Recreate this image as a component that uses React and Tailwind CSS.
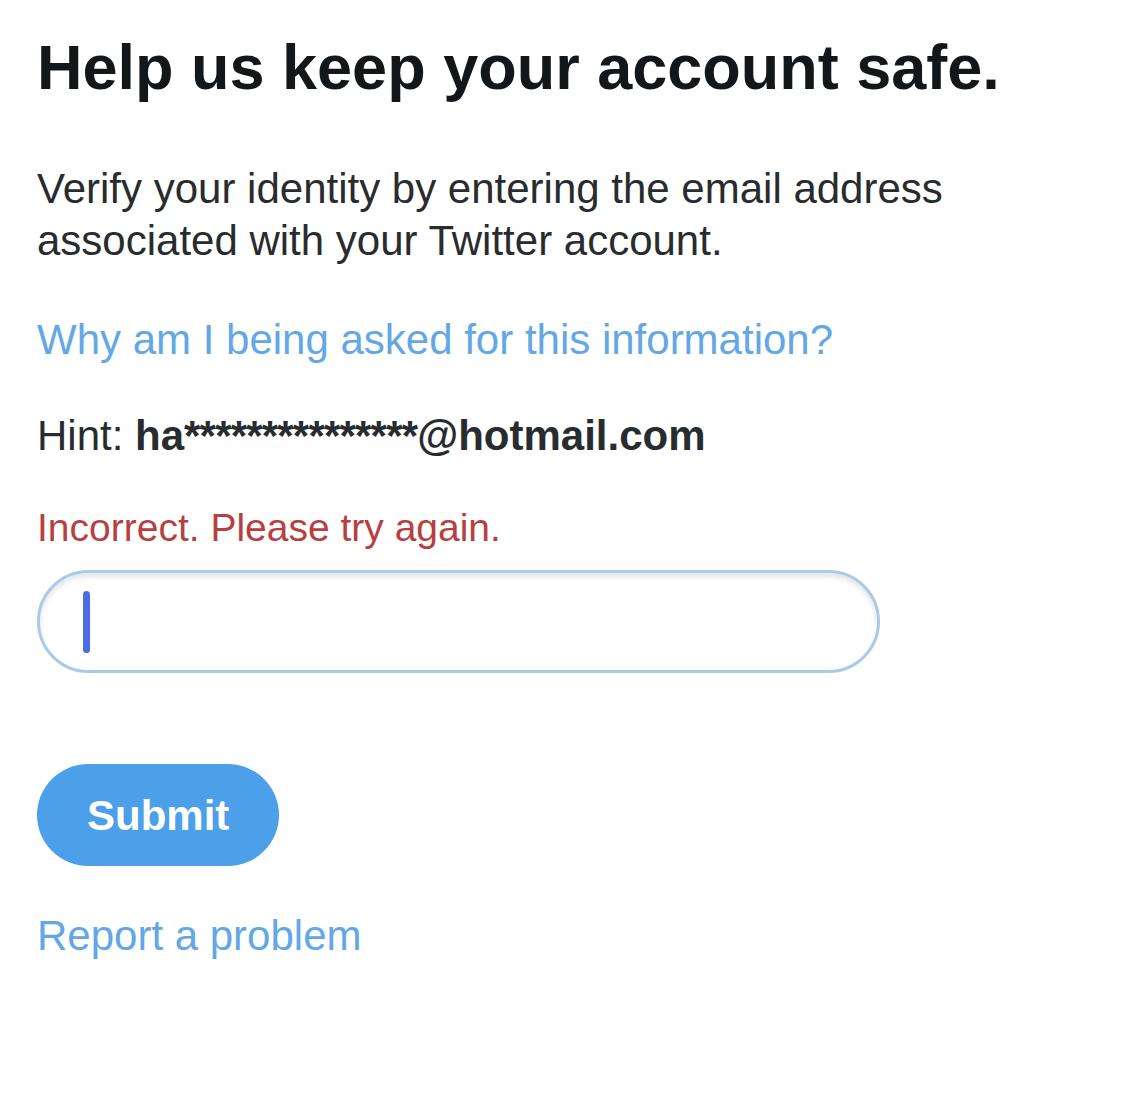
import { useState } from "react";

const App = () => {
  const [email] = useState("");

  return (
    <div className="min-h-screen bg-white pl-[37px] pt-[29px] font-['Liberation_Sans',Arial,sans-serif]">
      <h1 className="text-[63px] leading-[76px] font-bold text-[#14171a]">
        Help us keep your account safe.
      </h1>
      <p className="mt-[58px] text-[42px] leading-[52px] text-[#292c2f]">
        Verify your identity by entering the email address
        <br />
        associated with your Twitter account.
      </p>
      <a href="#" className="mt-[47px] block text-[42px] leading-[52px] text-[#63a7e6]">
        Why am I being asked for this information?
      </a>
      <p className="mt-[44px] text-[42px] leading-[52px] text-[#292c2f]">
        Hint:{" "}
        <span className="font-bold">
          ha<span className="tracking-[-0.8px]">***************</span>@hotmail.com
        </span>
      </p>
      <p className="mt-[40px] text-[39px] leading-[52px] text-[#b83f3f]">
        Incorrect. Please try again.
      </p>
      <div className="mt-[16px] flex h-[103px] w-[843px] items-center rounded-full border-[3px] border-[#a8cbea] bg-white pl-[43px] shadow-[inset_0_4px_5px_rgba(0,0,0,0.10)]">
        <span className="text-[42px]">{email}</span>
        <span className="block h-[62px] w-[7px] rounded-full bg-[#4c6be6]"></span>
      </div>
      <button className="mt-[91px] flex h-[102px] items-center rounded-full bg-[#4c9fe9] px-[50px] text-[42px] font-bold text-white">
        Submit
      </button>
      <a href="#" className="mt-[44px] block text-[42px] leading-[52px] text-[#63a7e6]">
        Report a problem
      </a>
    </div>
  );
};

export default App;
